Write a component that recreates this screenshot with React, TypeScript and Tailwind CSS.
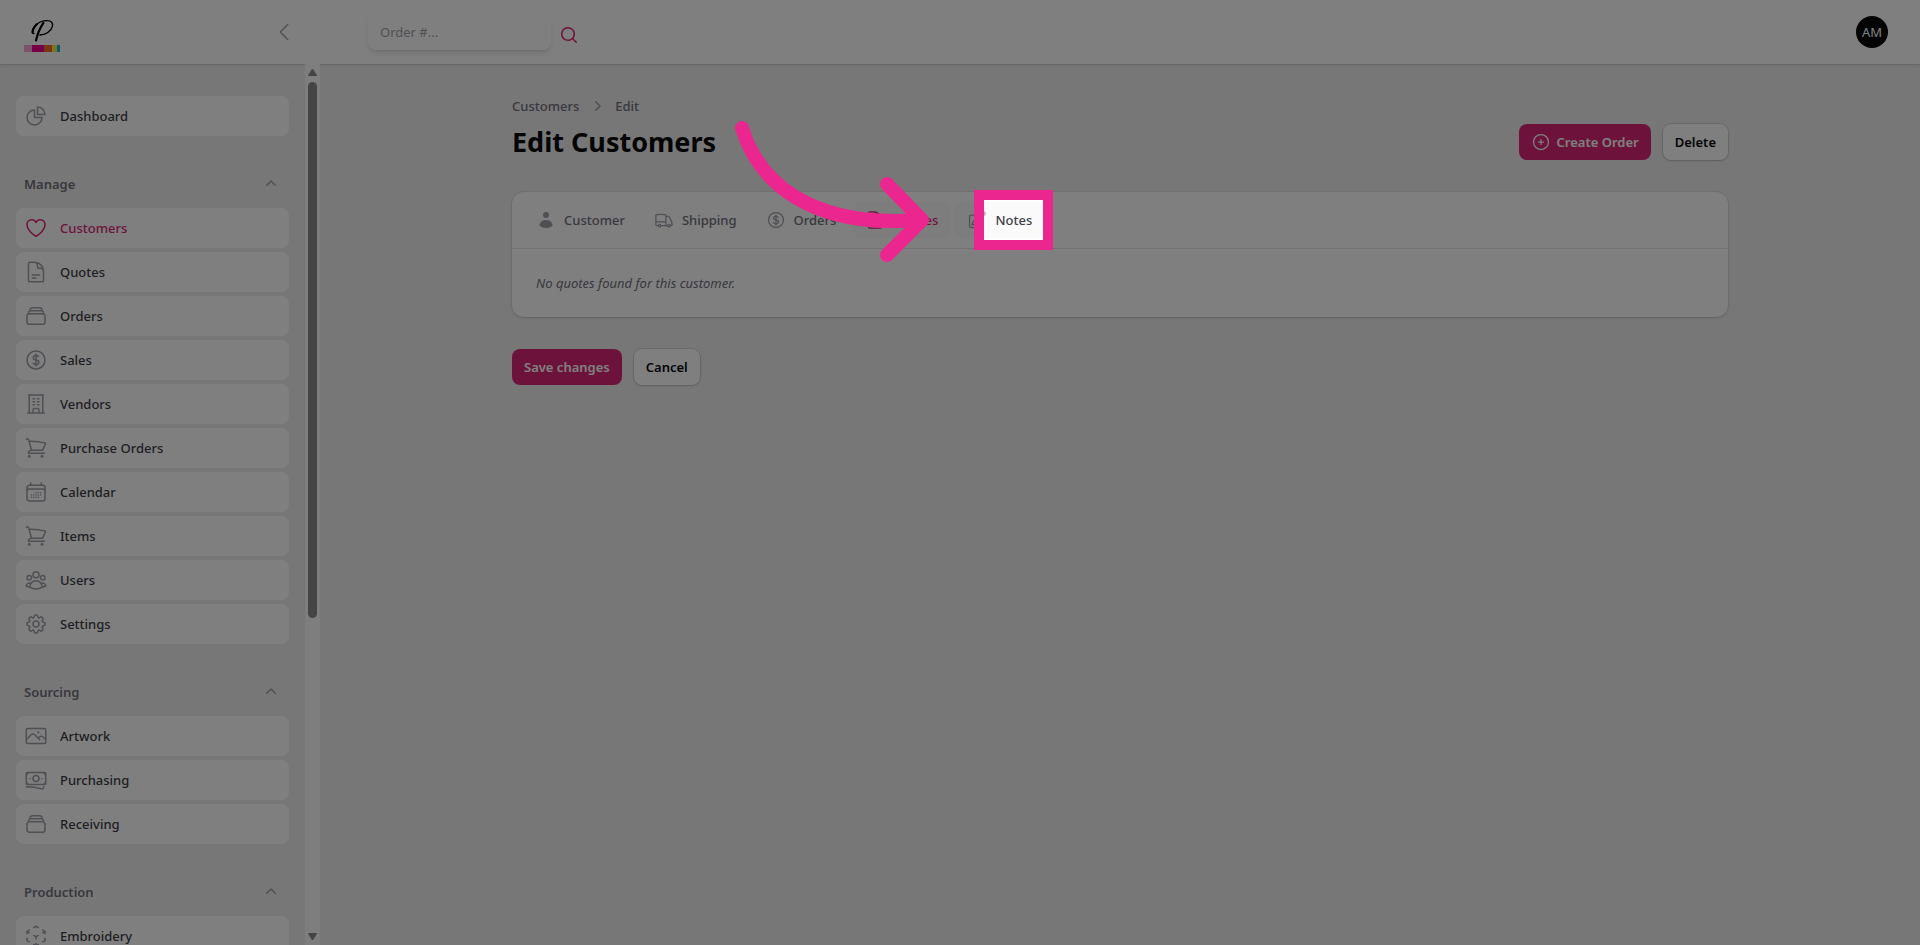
import type { ComponentType, ReactNode } from "react";
import {
  HiMiniChevronRight,
  HiMiniChevronUp,
  HiMiniMagnifyingGlass,
  HiMiniUser,
  HiOutlineBanknotes,
  HiOutlineBuildingOffice,
  HiOutlineCalendarDays,
  HiOutlineChartPie,
  HiOutlineChevronLeft,
  HiOutlineCog8Tooth,
  HiOutlineCubeTransparent,
  HiOutlineCurrencyDollar,
  HiOutlineDocumentText,
  HiOutlineHeart,
  HiOutlinePencilSquare,
  HiOutlinePhoto,
  HiOutlinePlusCircle,
  HiOutlineRectangleStack,
  HiOutlineShoppingCart,
  HiOutlineTruck,
  HiOutlineUserGroup,
} from "react-icons/hi2";

type Icon = ComponentType<{ className?: string }>;
type NavItem = { label: string; icon: Icon; active?: boolean };
type NavGroup = { title: string; items: NavItem[] };

const groups: NavGroup[] = [
  {
    title: "Manage",
    items: [
      { label: "Customers", icon: HiOutlineHeart, active: true },
      { label: "Quotes", icon: HiOutlineDocumentText },
      { label: "Orders", icon: HiOutlineRectangleStack },
      { label: "Sales", icon: HiOutlineCurrencyDollar },
      { label: "Vendors", icon: HiOutlineBuildingOffice },
      { label: "Purchase Orders", icon: HiOutlineShoppingCart },
      { label: "Calendar", icon: HiOutlineCalendarDays },
      { label: "Items", icon: HiOutlineShoppingCart },
      { label: "Users", icon: HiOutlineUserGroup },
      { label: "Settings", icon: HiOutlineCog8Tooth },
    ],
  },
  {
    title: "Sourcing",
    items: [
      { label: "Artwork", icon: HiOutlinePhoto },
      { label: "Purchasing", icon: HiOutlineBanknotes },
      { label: "Receiving", icon: HiOutlineRectangleStack },
    ],
  },
  {
    title: "Production",
    items: [{ label: "Embroidery", icon: HiOutlineCubeTransparent }],
  },
];

function NavLink({ label, icon: ItemIcon, active }: NavItem) {
  return (
    <li>
      <a
        href="#"
        className={`flex h-10 items-center gap-3 rounded-lg bg-white px-2 font-medium ${
          active ? "text-[#db2777]" : "text-zinc-700"
        }`}
      >
        <ItemIcon className={`size-6 ${active ? "text-[#db2777]" : "text-zinc-400"}`} />
        {label}
      </a>
    </li>
  );
}

function Logo() {
  return (
    <svg viewBox="0 0 36 34" className="h-[34px] w-9" role="img" aria-label="Home">
      <g fill="none" stroke="#000" strokeLinecap="round" strokeLinejoin="round">
        <path
          d="M10 15.600C7 15.600 7.800 11 11.600 7.200C15 3.800 19.400 2.600 23 2.600C27.400 2.600 29.200 5 28.400 8.400C27.200 13.200 21.600 17 15.800 17"
          strokeWidth="1.400"
        />
        <path d="M8.700 14.600C8.700 11.600 10.600 8.400 13 6" strokeWidth="2" />
        <path d="M19.400 4.800C16.600 9 13.600 15 12 22.400" strokeWidth="2.200" />
      </g>
      <path fill="#f9a8d4" d="M0 27h9v7H0z" />
      <path fill="#ec008c" d="M8 27h12v7H8z" />
      <path fill="#f26a2a" d="M20 27h8v7h-8z" />
      <path fill="#f4ec3c" d="M28 27h5v7h-5z" />
      <path fill="#12b5d8" d="M33 27h3v7h-3z" />
    </svg>
  );
}

function ScrollRail() {
  return (
    <div className="flex w-[15px] flex-col items-center bg-[#fcfcfc] py-1" aria-hidden="true">
      <svg viewBox="0 0 9 9" className="size-[9px]" fill="#8b8b8b">
        <path d="M4.500 1q.5 0 .9.500L8.800 7q.3 1-.8 1H1Q-.1 8 .2 7l3.400-5.500Q4 1 4.500 1z" />
      </svg>
      <div className="mt-[5px] h-[536px] w-[9px] rounded-full bg-[#8b8b8b]" />
      <svg viewBox="0 0 9 9" className="mt-auto size-[9px]" fill="#8b8b8b">
        <path d="M4.500 8q.5 0 .9-.5L8.800 2Q9.100 1 8 1H1Q-.1 1 .2 2l3.400 5.500Q4 8 4.500 8z" />
      </svg>
    </div>
  );
}

function Sidebar() {
  return (
    <aside className="flex min-h-0 w-80 shrink-0">
      <nav className="flex min-w-0 flex-1 flex-col gap-7 overflow-hidden px-4 pt-8">
        <ul>
          <NavLink label="Dashboard" icon={HiOutlineChartPie} />
        </ul>
        {groups.map((group) => (
          <section key={group.title} className="flex shrink-0 flex-col gap-1">
            <button type="button" className="flex h-10 items-center justify-between px-2 font-semibold text-zinc-500">
              {group.title}
              <HiMiniChevronUp className="size-5 text-zinc-400" />
            </button>
            <ul className="flex flex-col gap-1">
              {group.items.map((item) => (
                <NavLink key={item.label} {...item} />
              ))}
            </ul>
          </section>
        ))}
      </nav>
      <ScrollRail />
    </aside>
  );
}

type TabProps = { icon: Icon; children: ReactNode; active?: boolean; hovered?: boolean };

function Tab({ icon: TabIcon, children, active, hovered }: TabProps) {
  return (
    <a
      href="#"
      className={`flex h-9 items-center gap-2 rounded-lg px-3 font-medium ${
        active ? "bg-zinc-50 text-[#db2777]" : hovered ? "bg-zinc-50 text-zinc-700" : "text-zinc-500"
      }`}
    >
      <TabIcon className={`size-5 ${active ? "text-[#db2777]" : "text-zinc-400"}`} />
      {children}
    </a>
  );
}

/* Dims the whole page around its parent and frames it, with an arrow pointing in. */
function Spotlight() {
  return (
    <span className="pointer-events-none absolute -inset-x-[11px] -inset-y-[10px] z-50 shadow-[0_0_0_2400px_rgba(0,0,0,0.5)]">
      <span className="absolute -inset-[10px] border-[10px] border-[#ec268f]" />
      <svg
        viewBox="0 0 200 150"
        className="absolute right-full top-1/2 mr-[51px] h-[150px] w-[200px] -translate-y-[105px]"
        fill="none"
        stroke="#ec268f"
        strokeLinecap="round"
        strokeLinejoin="round"
        strokeWidth="14"
        aria-hidden="true"
      >
        <path d="M9 13C26 68 78 113 185 105" />
        <path d="M154 69L189 105L154 140" />
      </svg>
    </span>
  );
}

export default function App() {
  return (
    <div className="flex h-screen flex-col overflow-hidden bg-[#eeeeee] font-['Noto_Sans',sans-serif] text-[13px] leading-5">
      <header className="flex h-16 shrink-0 items-center bg-white shadow-sm ring-1 ring-zinc-950/5">
        <div className="flex w-80 shrink-0 items-center justify-between px-6">
          <a href="#" className="mt-1.5">
            <Logo />
          </a>
          <button type="button" aria-label="Collapse sidebar">
            <HiOutlineChevronLeft className="size-6 text-zinc-400" />
          </button>
        </div>
        <form className="ml-12 flex items-center gap-2">
          <input
            type="text"
            aria-label="Order number"
            placeholder="Order #..."
            className="h-9 w-[183px] rounded-lg bg-white px-3 shadow-md outline-none placeholder:text-zinc-400"
          />
          <button type="submit" aria-label="Search" className="mt-1.5">
            <HiMiniMagnifyingGlass className="size-5 text-[#db2777]" />
          </button>
        </form>
        <button type="button" className="ml-auto mr-8 size-8 rounded-full bg-zinc-950 text-[13px] text-white">
          AM
        </button>
      </header>
      <div className="flex min-h-0 flex-1">
        <Sidebar />
        <main className="min-w-0 flex-1 px-8 pt-8">
          <div className="mx-auto flex max-w-[1216px] flex-col gap-8">
            <div className="flex items-end justify-between">
              <div className="flex flex-col gap-2">
                <ol className="flex items-center gap-2 font-medium text-zinc-500">
                  <li>
                    <a href="#">Customers</a>
                  </li>
                  <li className="flex items-center gap-2">
                    <HiMiniChevronRight className="size-5 text-zinc-400" />
                    <a href="#">Edit</a>
                  </li>
                </ol>
                <h1 className="text-[27px] font-bold leading-9 text-zinc-950">Edit Customers</h1>
              </div>
              <div className="flex items-center gap-3">
                <button type="button" className="flex h-9 items-center gap-1.5 rounded-lg bg-[#db2777] px-3 font-semibold text-white">
                  <HiOutlinePlusCircle className="size-5" />
                  Create Order
                </button>
                <button type="button" className="h-9 rounded-lg bg-white px-3 font-semibold text-zinc-950 shadow-sm ring-1 ring-zinc-950/10">
                  Delete
                </button>
              </div>
            </div>
            <section className="rounded-xl bg-white shadow-sm ring-1 ring-zinc-950/5">
              <nav className="flex gap-[5px] border-b border-zinc-200 px-3 py-[10px]">
                <Tab icon={HiMiniUser}>Customer</Tab>
                <Tab icon={HiOutlineTruck}>Shipping</Tab>
                <Tab icon={HiOutlineCurrencyDollar}>Orders</Tab>
                <Tab icon={HiOutlineDocumentText} active>
                  Quotes
                </Tab>
                <Tab icon={HiOutlinePencilSquare} hovered>
                  <span className="relative">
                    Notes
                    <Spotlight />
                  </span>
                </Tab>
              </nav>
              <p className="p-6 italic text-zinc-500">No quotes found for this customer.</p>
            </section>
            <div className="flex items-center gap-3">
              <button type="button" className="h-9 rounded-lg bg-[#db2777] px-3 font-semibold text-white">
                Save changes
              </button>
              <button type="button" className="h-9 rounded-lg bg-white px-3 font-semibold text-zinc-950 shadow-sm ring-1 ring-zinc-950/10">
                Cancel
              </button>
            </div>
          </div>
        </main>
      </div>
    </div>
  );
}
